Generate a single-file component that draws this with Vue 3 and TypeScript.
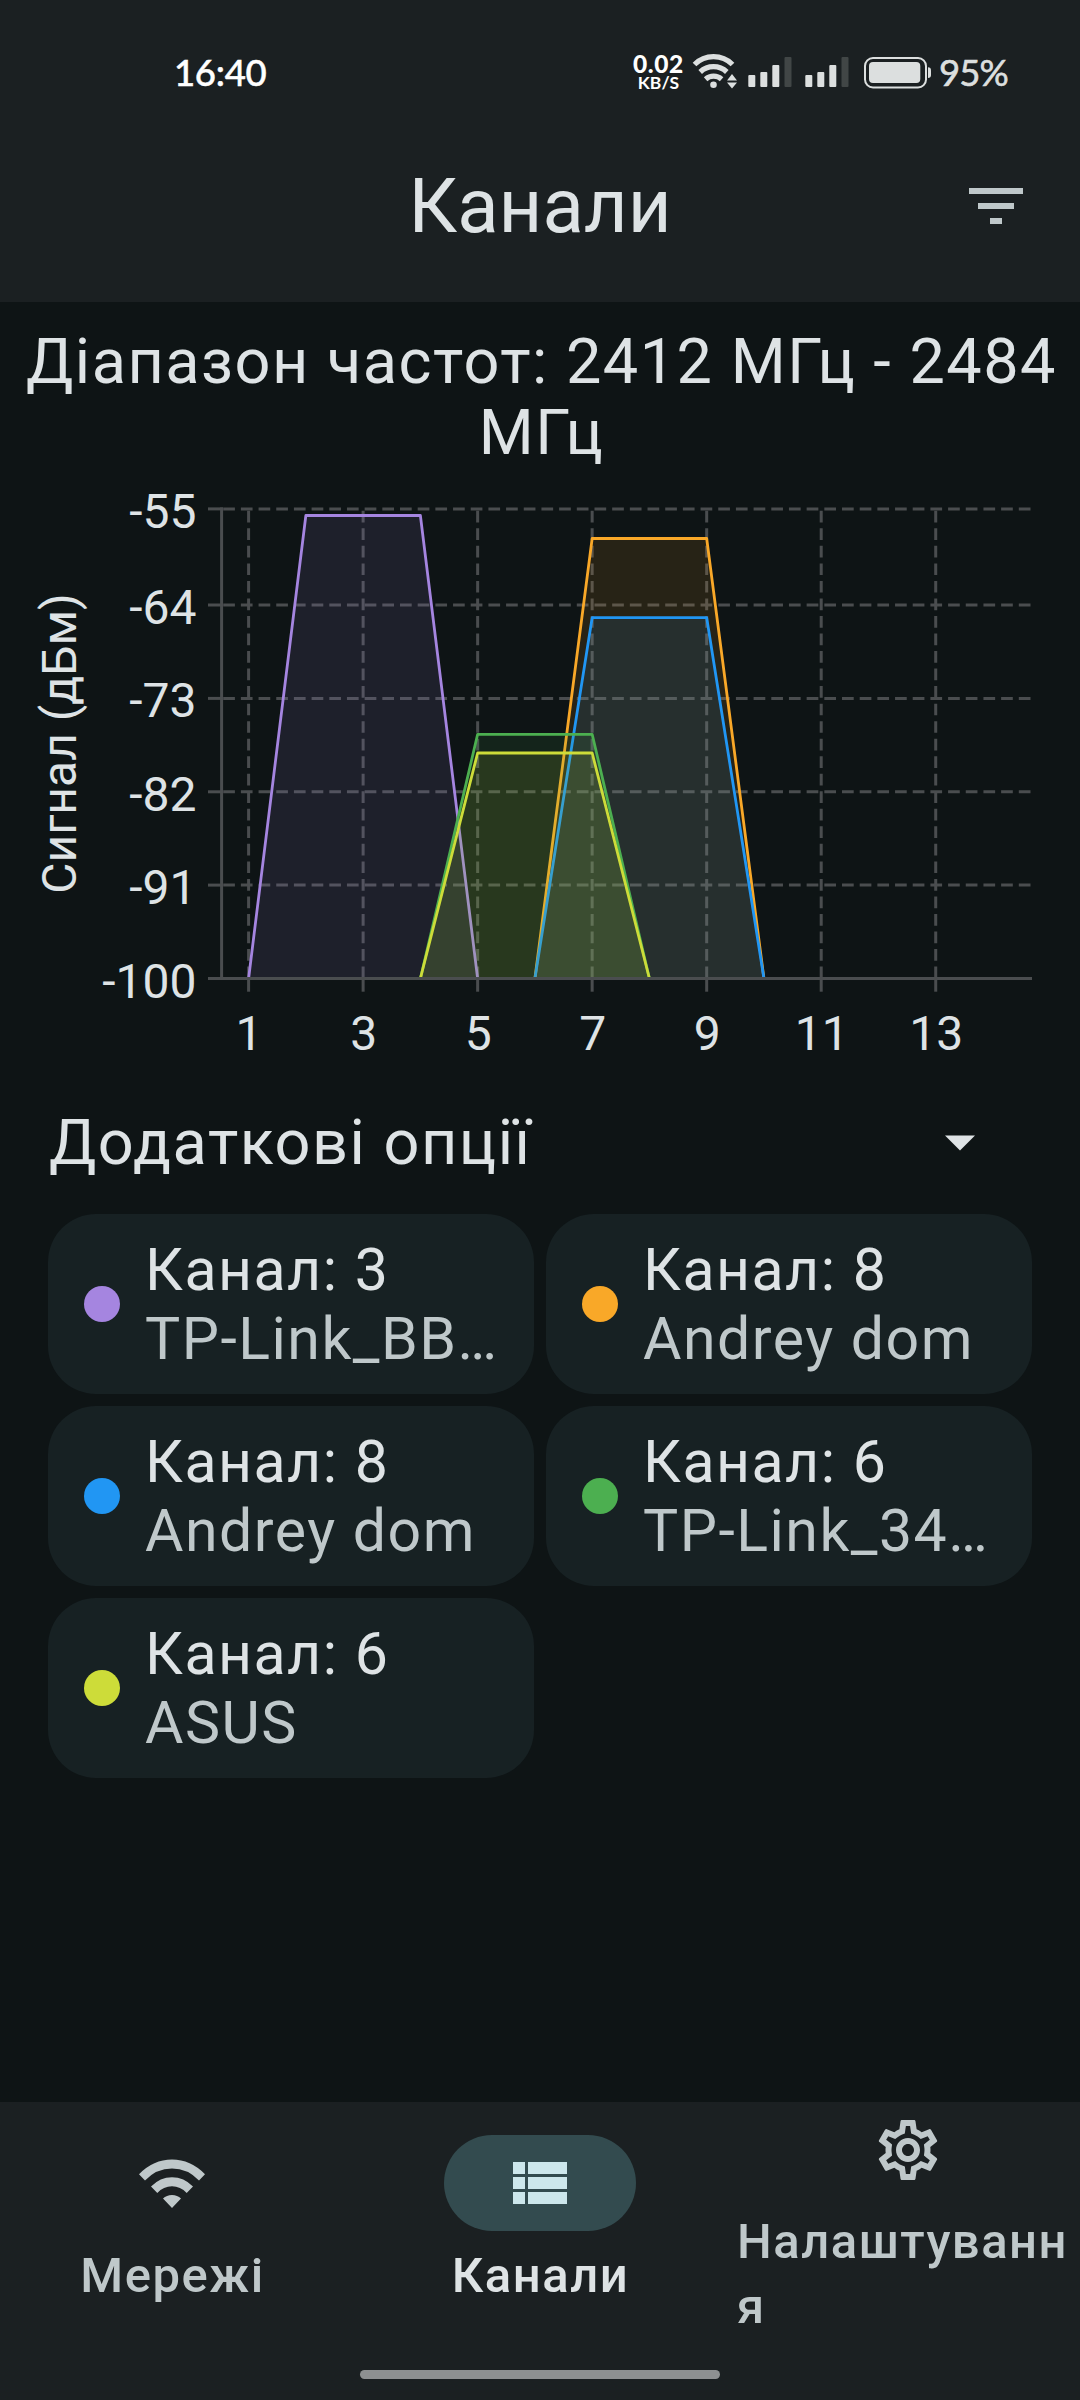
<script setup lang="ts">
interface Network {
  channel: number
  ssid: string
  color: string
  top: number
}

const networks: Network[] = [
  { channel: 3, ssid: 'TP-Link_BBF4', color: '#a585e0', top: 515.5 },
  { channel: 8, ssid: 'Andrey dom', color: '#f9a828', top: 538.5 },
  { channel: 8, ssid: 'Andrey dom', color: '#2196f3', top: 617.7 },
  { channel: 6, ssid: 'TP-Link_3428', color: '#4caf50', top: 734.3 },
  { channel: 6, ssid: 'ASUS', color: '#cddc39', top: 753 },
]

const base = 978.5
const chX = (channel: number): number => 248.6 + (channel - 1) * 57.26

const outline = (n: Network): string =>
  [
    [chX(n.channel - 2), base],
    [chX(n.channel - 1), n.top],
    [chX(n.channel + 1), n.top],
    [chX(n.channel + 2), base],
  ]
    .map((p) => p.join(','))
    .join(' ')

const levels = [
  { label: '-55', y: 508.9 },
  { label: '-64', y: 605 },
  { label: '-73', y: 698.4 },
  { label: '-82', y: 791.8 },
  { label: '-91', y: 885.1 },
  { label: '-100', y: 978.5 },
]
const channels = [1, 3, 5, 7, 9, 11, 13]
</script>

<template>
  <div class="screen">
    <header class="top">
      <div class="status">
        <span class="clock">16:40</span>
        <div class="speed"><b>0.02</b><span>KB/S</span></div>
        <svg class="sys" width="245" height="40" viewBox="690 52 245 40">
          <g fill="none" stroke="#dcdfdf" stroke-width="5.2">
            <path d="M694.5 64.5a27 27 0 0 1 38 0" />
            <path d="M700.2 72a19.4 19.4 0 0 1 26.6 0" />
            <path d="M705.6 79.2a12 12 0 0 1 16 0" />
          </g>
          <circle cx="713.5" cy="84.8" r="3.3" fill="#dcdfdf" />
          <path d="M727 80.6l5-6.6 5 6.6zM727 82.6h10l-5 6z" fill="#dcdfdf" />
          <g fill="#dcdfdf">
            <rect x="748.3" y="75" width="7" height="12" rx="1" />
            <rect x="760.3" y="72" width="7" height="15" rx="1" />
            <rect x="772.3" y="65" width="7" height="22" rx="1" />
            <rect x="805.3" y="75" width="7" height="12" rx="1" />
            <rect x="817.3" y="72" width="7" height="15" rx="1" />
            <rect x="829.3" y="65" width="7" height="22" rx="1" />
            <rect x="869" y="62" width="51.3" height="21" rx="4" />
            <path d="M928 67.3q3 0 3 3v4.700q0 3-3 3z" />
          </g>
          <g fill="#414646">
            <rect x="784.5" y="57" width="7" height="30" rx="1" />
            <rect x="841.500" y="57" width="7" height="30" rx="1" />
          </g>
          <rect x="865" y="58" width="61" height="29.500" rx="8" fill="none" stroke="#dcdfdf" stroke-width="2" />
        </svg>
        <span class="percent">95%</span>
      </div>
      <div class="bar">
        <h1>Канали</h1>
        <svg class="filter" width="72" height="72" viewBox="0 0 24 24" fill="#bfc8ca">
          <path d="M10 18h4v-2h-4v2zM3 6v2h18V6H3zm3 7h12v-2H6v2z" />
        </svg>
      </div>
    </header>

    <main>
      <h2 class="range">Діапазон частот: 2412 МГц - 2484 МГц</h2>

      <svg class="chart" width="1080" height="604" viewBox="0 468 1080 604">
        <g class="grid">
          <path v-for="l in levels.slice(0, 5)" :key="l.label" :d="`M223.2 ${l.y}H1032`" stroke-dasharray="11.7 5.98" />
          <path v-for="c in channels" :key="c" :d="`M${chX(c)} 510.800V978`" stroke-dasharray="11.7 5.83" />
        </g>
        <g v-for="(n, i) in networks" :key="i">
          <polygon :points="outline(n)" :fill="n.color" fill-opacity="0.11" />
          <polyline :points="outline(n)" :stroke="n.color" fill="none" stroke-width="2.8" stroke-linejoin="round" />
        </g>
        <g class="axis">
          <path d="M221.600 507.500V980" />
          <path d="M208 978.500H1032" />
          <path v-for="l in levels" :key="l.label" :d="`M208 ${l.y}H223`" />
          <path v-for="c in channels" :key="c" :d="`M${chX(c)} 978.500V991.700`" />
        </g>
        <g class="labels">
          <text v-for="l in levels" :key="l.label" x="196.500" :y="l.y + 19" text-anchor="end">{{ l.label }}</text>
          <text v-for="c in channels" :key="c" :x="chX(c) + 0.5" y="1050" text-anchor="middle">{{ c }}</text>
          <text transform="translate(75.800 743.500) rotate(-90)" text-anchor="middle">Сигнал (дБм)</text>
        </g>
      </svg>

      <div class="options">
        <span>Додаткові опції</span>
        <svg width="72" height="72" viewBox="0 0 24 24" fill="#dee3e5"><path d="M7 9.800l5 5 5-5z" /></svg>
      </div>

      <div class="cards">
        <div v-for="(n, i) in networks" :key="i" class="card">
          <i class="dot" :style="{ background: n.color }"></i>
          <div class="info">
            <div class="ch">Канал: {{ n.channel }}</div>
            <div class="ssid">{{ n.ssid }}</div>
          </div>
        </div>
      </div>
    </main>

    <nav>
      <div class="items">
        <div class="item">
          <div class="pill">
            <svg width="72" height="72" viewBox="0 0 24 24" fill="#bfc8ca">
              <path d="M12 20.300L9 17.200Q10.200 16 12 16t3 1.200zM7.100 15.300L5 13.200Q8 10.100 12 10.100t7 3.100l-2.100 2.100Q14.800 13.100 12 13.100t-4.900 2.200zM3 11.200L1 9.100Q5.800 4.200 12 4.200t11 4.900l-2 2.100Q17.200 7.200 12 7.200t-9 4z" />
            </svg>
          </div>
          <span>Мережі</span>
        </div>
        <div class="item active">
          <div class="pill">
            <svg width="72" height="72" viewBox="0 0 24 24" fill="#cde7ec">
              <path d="M3 5h4v4H3zM3 10h4v4H3zM3 15h4v4H3zM8 5h13v4H8zM8 10h13v4H8zM8 15h13v4H8z" />
            </svg>
          </div>
          <span>Канали</span>
        </div>
        <div class="item tall">
          <div class="pill">
            <svg width="72" height="72" viewBox="0 0 24 24" fill="#bfc8ca">
              <path d="M19.430 12.980c.04-.32.07-.64.07-.98 0-.34-.03-.66-.07-.98l2.110-1.650c.19-.15.24-.42.12-.64l-2-3.460c-.09-.16-.26-.25-.44-.25-.06 0-.12.010-.17.030l-2.490 1c-.52-.4-1.080-.73-1.690-.98l-.38-2.650C14.460 2.180 14.250 2 14 2h-4c-.25 0-.46.180-.49.420l-.38 2.650c-.61.25-1.170.59-1.690.98l-2.490-1c-.06-.02-.12-.03-.18-.03-.17 0-.34.090-.43.250l-2 3.460c-.13.220-.07.490.12.640l2.110 1.650c-.04.320-.07.650-.07.980 0 .33.030.66.070.98l-2.110 1.650c-.19.150-.24.420-.12.640l2 3.460c.09.160.26.250.44.250.06 0 .12-.01.17-.03l2.490-1c.52.400 1.080.730 1.690.980l.38 2.650c.03.240.24.420.49.420h4c.25 0 .46-.18.49-.42l.38-2.650c.61-.25 1.170-.59 1.690-.98l2.490 1c.06.020.12.030.18.030.17 0 .34-.09.43-.25l2-3.460c.12-.22.07-.49-.12-.64l-2.110-1.650zm-1.980-1.710c.04.310.05.520.05.730 0 .21-.02.430-.05.730l-.14 1.130.89.700 1.080.840-.7 1.210-1.270-.51-1.040-.42-.9.680c-.43.320-.84.560-1.250.730l-1.060.430-.16 1.130-.2 1.350h-1.400l-.19-1.350-.16-1.130-1.060-.43c-.43-.18-.83-.41-1.230-.71l-.91-.7-1.060.430-1.270.510-.7-1.210 1.080-.84.89-.7-.14-1.130c-.03-.31-.05-.54-.05-.74s.02-.43.05-.73l.14-1.130-.89-.7-1.080-.84.700-1.210 1.270.510 1.040.420.900-.68c.43-.32.840-.56 1.250-.73l1.060-.43.160-1.130.200-1.350h1.390l.19 1.350.16 1.130 1.060.430c.43.180.83.410 1.230.710l.91.700 1.060-.43 1.270-.51.700 1.210-1.070.850-.89.700.14 1.130zM12 8c-2.210 0-4 1.790-4 4s1.790 4 4 4 4-1.790 4-4-1.790-4-4-4zm0 6c-1.100 0-2-.9-2-2s.9-2 2-2 2 .9 2 2-.9 2-2 2z" />
            </svg>
          </div>
          <span>Налаштування</span>
        </div>
      </div>
      <div class="handle"></div>
    </nav>
  </div>
</template>

<style>
body {
  background: #0e1415;
}
</style>

<style scoped>
.screen {
  width: 1080px;
  height: 2400px;
  display: flex;
  flex-direction: column;
  background: #0e1415;
  color: #dee3e5;
  font-family: Roboto, 'Noto Sans', sans-serif;
  overflow: hidden;
}
svg {
  display: block;
  flex: none;
}
.top {
  height: 302px;
  background: #1b2022;
}
.status {
  box-sizing: border-box;
  height: 110px;
  padding: 48px 0 0 174px;
  display: flex;
  align-items: flex-start;
}
.clock {
  width: 456px;
  color: #fff;
  font: 500 36.500px/48px Lato, sans-serif;
  letter-spacing: -0.3px;
  -webkit-text-stroke: 0.5px #fff;
}
.speed {
  width: 57px;
  padding-top: 5px;
  display: flex;
  flex-direction: column;
  align-items: center;
  color: #fff;
  font-family: Lato, sans-serif;
  font-weight: 700;
}
.speed b {
  font-size: 24.500px;
  line-height: 21px;
  letter-spacing: 0.6px;
}
.speed span {
  font-size: 17.500px;
  line-height: 17px;
}
.sys {
  margin: 4px 0 0 3px;
}
.percent {
  margin-left: 4px;
  color: #dcdfdf;
  font: 400 36.500px/48px Lato, sans-serif;
  letter-spacing: -0.9px;
  -webkit-text-stroke: 0.6px #dcdfdf;
}
.bar {
  height: 192px;
  padding: 0 48px;
  display: grid;
  grid-template-columns: 72px 1fr 72px;
  align-items: center;
}
h1 {
  grid-column: 2;
  margin: 0;
  text-align: center;
  font-size: 76px;
  font-weight: 400;
  line-height: 90px;
}
.range {
  margin: 0;
  padding: 25px 0 0 3px;
  text-align: center;
  font-size: 63px;
  line-height: 70.700px;
  font-weight: 400;
  letter-spacing: 1.5px;
}
.grid path,
.axis path {
  fill: none;
  stroke: #4a4d4f;
  stroke-width: 3;
}
.labels {
  fill: #dee3e5;
  font-size: 48px;
}
.options {
  box-sizing: border-box;
  height: 142px;
  padding: 0 84px 2px 49px;
  display: flex;
  align-items: center;
  justify-content: space-between;
  font-size: 63px;
  letter-spacing: 1.5px;
}
.cards {
  padding: 0 48px;
  display: grid;
  grid-template-columns: 486px 486px;
  gap: 12px;
}
.card {
  box-sizing: border-box;
  height: 180px;
  padding: 0 35px 0 36px;
  display: flex;
  align-items: center;
  gap: 25px;
  border-radius: 48px;
  background: #172123;
}
.dot {
  width: 36px;
  height: 36px;
  flex: none;
  border-radius: 50%;
}
.info {
  flex: 1;
  min-width: 0;
  font-size: 59px;
  line-height: 69px;
  letter-spacing: 1.500px;
}
.ssid {
  color: #bfc8ca;
  overflow: hidden;
  text-overflow: ellipsis;
  white-space: nowrap;
}
nav {
  height: 298px;
  margin-top: auto;
  background: #1b2022;
}
.items {
  height: 239px;
  display: flex;
  gap: 24px;
}
.item {
  width: 344px;
  display: flex;
  flex-direction: column;
  align-items: center;
  justify-content: center;
  gap: 12px;
  color: #bfc8ca;
  font-size: 49px;
  line-height: 65px;
  font-weight: 500;
  letter-spacing: 1.5px;
}
.item span {
  box-sizing: border-box;
  max-width: 344px;
  padding-left: 1px;
  word-break: break-all;
}
.tall {
  height: 237px;
}
.pill {
  width: 192px;
  height: 96px;
  display: flex;
  align-items: center;
  justify-content: center;
  border-radius: 48px;
}
.active {
  color: #dee3e5;
}
.active .pill {
  background: #334b4f;
}
.handle {
  width: 360px;
  height: 9px;
  margin: 29px auto 0;
  border-radius: 5px;
  background: #8d9091;
}
</style>
